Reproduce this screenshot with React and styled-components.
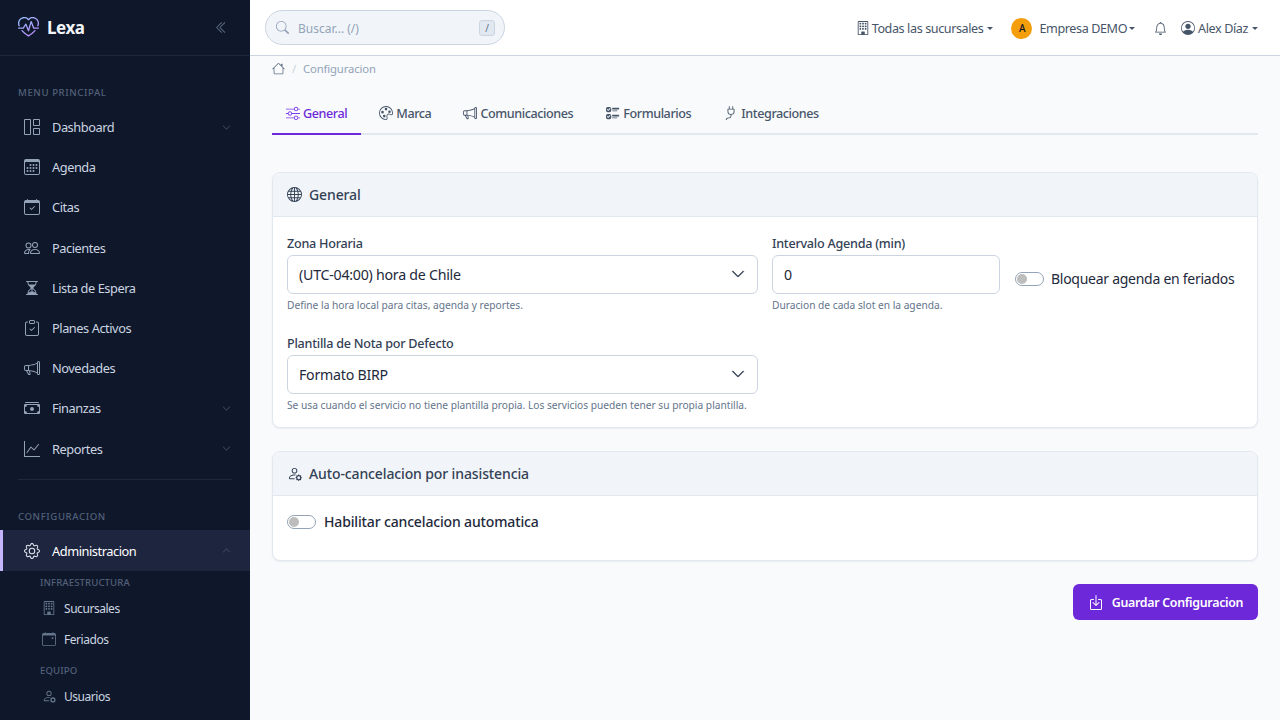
import React from "react";
import styled, { createGlobalStyle } from "styled-components";
import {
  BsBell, BsBoxArrowInDown, BsBuilding, BsCalendar3, BsCalendarCheck, BsCalendarEvent,
  BsCashStack, BsChevronDoubleLeft, BsChevronDown, BsChevronUp, BsClipboardCheck, BsGear,
  BsGlobe, BsGraphUp, BsGrid1X2, BsHeartPulse, BsHourglassSplit, BsHouse, BsMegaphone,
  BsPalette, BsPeople, BsPersonCircle, BsPersonGear, BsPlug, BsSearch, BsSliders, BsUiChecks,
} from "react-icons/bs";

const Global = createGlobalStyle`
  html, body { margin: 0; padding: 0; height: 100%; overflow: hidden; }
  body { font-family: "Noto Sans", "Open Sans", sans-serif; background: #f8fafc; color: #1e293b; }
  * { box-sizing: border-box; }
`;

const Shell = styled.div`display: flex; width: 1280px; height: 720px; overflow: hidden;`;
const Sidebar = styled.aside`width: 250px; flex: none; height: 720px; background: #0f172a; overflow: hidden; color: #cbd5e1;`;
const Brand = styled.div`
  height: 56px; display: flex; align-items: center; padding: 0 22px 0 18px;
  border-bottom: 1px solid #1e293b;
`;
const GradientDefs = styled.svg`position: absolute; width: 0; height: 0;`;
const BrandMark = styled(BsHeartPulse)`width: 21px; height: 21px; flex: none; fill: url(#brandGradient);`;
const BrandName = styled.span`font-size: 17px; font-weight: 700; color: #f1f5f9; margin-left: 8px; flex: 1; letter-spacing: -0.45px;`;
const Collapse = styled.span`display: flex; color: #64748b; font-size: 13px;`;
const SectionLabel = styled.div`
  font-size: 9.6px; line-height: 14px; letter-spacing: 0.6px; color: #526079; font-weight: 500; padding-left: 18px;
  margin: ${p => p.$top}px 0 ${p => p.$bottom}px;
`;
const NavItem = styled.div`
  height: ${p => p.$active ? 41 : 40.2}px; display: flex; align-items: center; padding-left: ${p => p.$active ? 21 : 24}px; padding-right: 18px;
  padding-top: ${p => p.$active ? 1 : 0}px;
  font-size: 12.8px; letter-spacing: -0.45px;
  color: ${p => p.$active ? "#ffffff" : "#cbd5e1"};
  background: ${p => p.$active ? "#1e253f" : "transparent"};
  border-left: ${p => p.$active ? "3px solid #c4b5fd" : "none"};
  svg.main { width: 16px; height: 16px; color: ${p => p.$active ? "#e2e8f0" : "#94a3b8"}; margin-right: 12px; flex: none; }
  span { flex: 1; }
  svg.caret { font-size: 9px; color: #475569; margin-right: 1px; }
`;
const Divider = styled.div`height: 1px; background: #1e293b; margin: 10.2px 18px 0;`;
const SubLabel = styled.div`
  font-size: 9.6px; line-height: 14px; letter-spacing: 0.1px; color: #526079; font-weight: 500;
  padding-left: 40px; margin-top: ${p => p.$top}px; margin-bottom: 3px;
`;
const SubItem = styled.div`
  height: 31px; display: flex; align-items: center; padding-left: 42px; font-size: 12px; letter-spacing: -0.45px; color: #cbd5e1;
  svg { width: 14px; height: 14px; color: #64748b; margin-right: 8px; flex: none; }
`;

const Main = styled.div`flex: 1; min-width: 0; display: flex; flex-direction: column;`;
const Topbar = styled.header`
  height: 56px; flex: none; background: #fff; border-bottom: 1px solid #cbd5e1;
  display: flex; align-items: center; padding: 0 22px 0 15px; color: #475569; font-size: 12.6px; letter-spacing: -0.4px;
`;
const Search = styled.label`
  width: 240px; height: 35px; border: 1px solid #cbd5e1; border-radius: 18px; background: #f1f5f9;
  display: flex; align-items: center; padding: 0 9px 0 10px; flex: none;
  svg { width: 13px; height: 13px; color: #94a3b8; flex: none; }
`;
const SearchInput = styled.input`
  flex: 1; min-width: 0; border: 0; outline: 0; background: transparent; margin-left: 9px; padding: 2px 0 0; font: inherit; font-size: 12px;
  &::placeholder { color: #94a3b8; opacity: 1; }
`;
const Kbd = styled.span`
  width: 16px; height: 16px; border-radius: 3px; background: #e2e8f0; border: 1px solid #cbd5e1; color: #64748b;
  font-size: 10px; display: flex; align-items: center; justify-content: center;
`;
const TopRight = styled.div`margin-left: auto; display: flex; align-items: center; padding-top: 1px;`;
const TopItem = styled.div`
  display: flex; align-items: center; margin-left: ${p => p.$ml || 0}px;
  svg { width: 14px; height: 14px; color: #475569; margin-right: ${p => p.$iconGap || 3}px; flex: none; }
  &::after { content: ""; margin-left: ${p => p.$caretGap}px; border-top: 3.6px solid #475569; border-left: 3.5px solid transparent; border-right: 3.5px solid transparent; }
`;
const Avatar = styled.span`
  width: 21px; height: 21px; border-radius: 50%; background: #f59e0b; color: #0f172a; font-size: 10px; font-weight: 500;
  display: flex; align-items: center; justify-content: center; margin-right: 7px;
`;
const BellWrap = styled.span`display: flex; margin-left: 19px; color: #475569; font-size: 13px;`;

const Content = styled.main`flex: 1; padding: 0 22px; min-height: 0; background: #f8fafc;`;
const Crumbs = styled.nav`
  height: 24px; display: flex; align-items: center; font-size: 11.3px; letter-spacing: -0.15px; color: #94a3b8;
  svg { width: 13px; height: 13px; color: #64748b; }
  i { font-style: normal; margin: 0 7px; color: #cbd5e1; }
`;
const Tabs = styled.div`display: flex; border-bottom: 2px solid #e2e8f0; height: 55px; margin-bottom: 37px;`;
const Tab = styled.div`
  height: 55px; padding: 13px 14px 0; margin-right: ${p => p.$mr || 0}px; display: flex; align-items: center; font-size: 12.6px; font-weight: 500; letter-spacing: -0.42px;
  color: ${p => p.$active ? "#6d28d9" : "#475569"};
  border-bottom: 2px solid ${p => p.$active ? "#6d28d9" : "transparent"};
  svg { width: 14px; height: 14px; margin-right: 3px; flex: none; color: ${p => p.$active ? "#7c3aed" : "#475569"}; }
`;
const Card = styled.section`
  background: #fff; border: 1px solid #e2e8f0; border-radius: 8px; overflow: hidden; margin-bottom: 23px;
  box-shadow: 0 1px 2px rgba(15, 23, 42, 0.06);
`;
const CardHead = styled.div`
  height: 44px; background: #f1f5f9; border-bottom: 1px solid #e2e8f0; display: flex; align-items: center; padding: 0 14px;
  font-size: 14px; font-weight: 500; color: #334155; letter-spacing: -0.12px;
  svg { width: 15px; height: 15px; margin-right: 7px; flex: none; color: #334155; }
`;
const FormGrid = styled.div`
  display: grid; grid-template-columns: 471px 228px 1fr; column-gap: 14px; padding: 18px 14px 15px;
`;
const Field = styled.div`
  grid-column: ${p => p.$col || "auto"}; margin-bottom: ${p => p.$mb || 0}px; min-width: 0;
`;
const Label = styled.div`font-size: 12.6px; line-height: 18px; color: #334155; font-weight: 500; letter-spacing: -0.25px; margin-bottom: 2px;`;
const SelectWrap = styled.div`position: relative;`;
const Select = styled.select`
  appearance: none; width: 100%; height: 39px; border: 1px solid #cbd5e1; border-radius: 6px; background: #fff;
  padding: 0 11px; font: inherit; font-size: 14.2px; letter-spacing: -0.25px; color: #1e293b; outline: none;
`;
const Chevron = styled.span`
  position: absolute; right: 13px; top: 12px; display: flex; color: #334155; pointer-events: none;
`;
const Input = styled.input`
  width: 100%; height: 39px; border: 1px solid #cbd5e1; border-radius: 6px; background: #fff;
  padding: 0 11px; font: inherit; font-size: 14.2px; color: #1e293b; outline: none;
`;
const Help = styled.div`font-size: 10.2px; line-height: 14px; color: #64748b; margin-top: 4px;`;
const SwitchRow = styled.div`
  display: flex; align-items: center;
  ${p => p.$pad ? "padding: 16px 14px 28px;" : "align-self: start; margin: 34px 0 0 1px;"}
`;
const Switch = styled.span`
  width: 29px; height: 14px; border: 1px solid #94a3b8; border-radius: 8px; background: #fff; padding: 1px; display: flex; flex: none; margin-right: 7px;
  &::before { content: ""; width: 10px; height: 10px; border-radius: 50%; background: #bdbdbd; }
`;
const SwitchText = styled.span`
  font-size: 14px; line-height: 20px; color: #1e293b;
  letter-spacing: ${p => p.$strong ? "-0.15px" : "-0.27px"};
  margin-left: ${p => p.$strong ? 1 : 0}px;
  font-weight: ${p => p.$strong ? 500 : 400};
`;
const Actions = styled.div`display: flex; justify-content: flex-end;`;
const SaveButton = styled.button`
  height: 36px; width: 185px; border: 0; border-radius: 6px; background: #6d28d9; color: #fff; font: inherit; font-size: 12.4px; font-weight: 600; letter-spacing: -0.3px;
  display: flex; align-items: center; justify-content: center;
  svg { width: 16px; height: 16px; margin-right: 8px; }
`;

const navTop = [
  [BsGrid1X2, "Dashboard", true], [BsCalendar3, "Agenda"], [BsCalendarCheck, "Citas"], [BsPeople, "Pacientes"],
  [BsHourglassSplit, "Lista de Espera"], [BsClipboardCheck, "Planes Activos"], [BsMegaphone, "Novedades"],
  [BsCashStack, "Finanzas", true], [BsGraphUp, "Reportes", true],
];
const tabs = [
  [BsSliders, "General", true, 4], [BsPalette, "Marca", false, 4], [BsMegaphone, "Comunicaciones", false, 5],
  [BsUiChecks, "Formularios", false, 5], [BsPlug, "Integraciones"],
];

export default function App() {
  return (
    <Shell>
      <Global />
      <GradientDefs aria-hidden="true">
        <defs>
          <linearGradient id="brandGradient" x1="0" y1="0" x2="1" y2="1">
            <stop offset="0" stopColor="#93c5fd" />
            <stop offset="1" stopColor="#c084fc" />
          </linearGradient>
        </defs>
      </GradientDefs>
      <Sidebar>
        <Brand>
          <BrandMark />
          <BrandName>Lexa</BrandName>
          <Collapse><BsChevronDoubleLeft /></Collapse>
        </Brand>
        <SectionLabel $top={30} $bottom={7}>MENU PRINCIPAL</SectionLabel>
        {navTop.map(([Icon, name, caret]) => (
          <NavItem key={name}>
            <Icon className="main" />
            <span>{name}</span>
            {caret && <BsChevronDown className="caret" />}
          </NavItem>
        ))}
        <Divider />
        <SectionLabel $top={30} $bottom={6}>CONFIGURACION</SectionLabel>
        <NavItem $active>
          <BsGear className="main" />
          <span>Administracion</span>
          <BsChevronUp className="caret" />
        </NavItem>
        <SubLabel $top={5}>INFRAESTRUCTURA</SubLabel>
        <SubItem><BsBuilding />Sucursales</SubItem>
        <SubItem><BsCalendarEvent />Feriados</SubItem>
        <SubLabel $top={9}>EQUIPO</SubLabel>
        <SubItem><BsPersonGear />Usuarios</SubItem>
      </Sidebar>
      <Main>
        <Topbar>
          <Search>
            <BsSearch />
            <SearchInput placeholder="Buscar... (/)" />
            <Kbd>/</Kbd>
          </Search>
          <TopRight>
            <TopItem $caretGap={4} $iconGap={2}><BsBuilding />Todas las sucursales</TopItem>
            <TopItem $ml={18} $caretGap={2}><Avatar>A</Avatar>Empresa DEMO</TopItem>
            <BellWrap><BsBell /></BellWrap>
            <TopItem $ml={14} $caretGap={4}><BsPersonCircle />Alex Díaz</TopItem>
          </TopRight>
        </Topbar>
        <Content>
          <Crumbs><BsHouse /><i>/</i>Configuracion</Crumbs>
          <Tabs>
            {tabs.map(([Icon, name, active, mr]) => (
              <Tab key={name} $active={active} $mr={mr}><Icon />{name}</Tab>
            ))}
          </Tabs>
          <Card>
            <CardHead><BsGlobe />General</CardHead>
            <FormGrid>
              <Field $mb={23}>
                <Label>Zona Horaria</Label>
                <SelectWrap>
                  <Select defaultValue="cl"><option value="cl">(UTC-04:00) hora de Chile</option></Select>
                  <Chevron><BsChevronDown size={14} strokeWidth={0.6} /></Chevron>
                </SelectWrap>
                <Help>Define la hora local para citas, agenda y reportes.</Help>
              </Field>
              <Field>
                <Label>Intervalo Agenda (min)</Label>
                <Input defaultValue="0" />
                <Help>Duracion de cada slot en la agenda.</Help>
              </Field>
              <SwitchRow>
                <Switch />
                <SwitchText>Bloquear agenda en feriados</SwitchText>
              </SwitchRow>
              <Field $col="1">
                <Label>Plantilla de Nota por Defecto</Label>
                <SelectWrap>
                  <Select defaultValue="b"><option value="b">Formato BIRP</option></Select>
                  <Chevron><BsChevronDown size={14} strokeWidth={0.6} /></Chevron>
                </SelectWrap>
                <Help>Se usa cuando el servicio no tiene plantilla propia. Los servicios pueden tener su propia plantilla.</Help>
              </Field>
            </FormGrid>
          </Card>
          <Card>
            <CardHead><BsPersonGear />Auto-cancelacion por inasistencia</CardHead>
            <SwitchRow $pad>
              <Switch />
              <SwitchText $strong>Habilitar cancelacion automatica</SwitchText>
            </SwitchRow>
          </Card>
          <Actions>
            <SaveButton><BsBoxArrowInDown />Guardar Configuracion</SaveButton>
          </Actions>
        </Content>
      </Main>
    </Shell>
  );
}
